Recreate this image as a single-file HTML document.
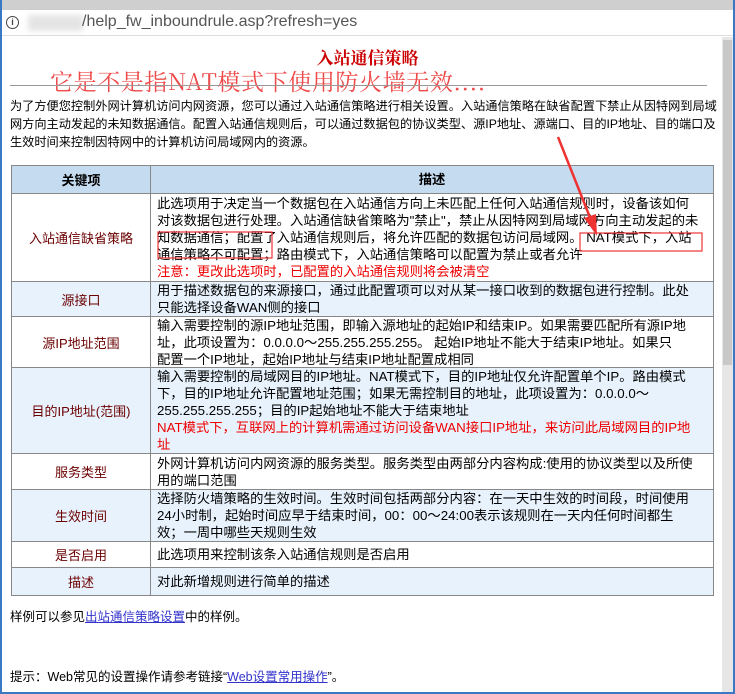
<!DOCTYPE html>
<html><head><meta charset="utf-8"><style>
*{margin:0;padding:0;box-sizing:border-box}
body{width:735px;height:694px;overflow:hidden;background:#fff;position:relative;font-family:"Liberation Sans","Noto Sans CJK SC",sans-serif;font-size:13px;color:#000}
.a{position:absolute}
.cell{position:absolute;border-right:1px solid #888;border-bottom:1px solid #888}
.k{left:11px;width:140px;color:#6b0000;text-align:center;display:flex;align-items:center;justify-content:center;border-left:1px solid #888}
.d{left:151px;width:563px;padding:0 6px;line-height:17px;display:flex;flex-direction:column;justify-content:center;white-space:nowrap;font-size:13.3px}
.bl{background:#e8f2fc}
.wh{background:#fff}
.red{color:#e00}
</style></head><body>
<div class="a" style="left:0;top:0;width:735px;height:10px;background:#cfcfcf"></div>
<div class="a" style="left:0;top:10px;width:735px;height:26px;background:#fff;border-bottom:1px solid #ddd"></div>
<div class="a" style="left:0;top:0;width:2px;height:694px;background:#3b78c4"></div>
<div class="a" style="left:733px;top:0;width:2px;height:694px;background:#3b78c4"></div>
<div class="a" style="left:0;top:692px;width:735px;height:2px;background:#3b78c4"></div>
<div class="a" style="left:6px;top:16px;width:13px;height:13px;border:1.5px solid #444;border-radius:50%;font-size:9px;line-height:10px;text-align:center;font-weight:bold;color:#444">i</div>
<div class="a" style="left:28px;top:15px;width:55px;height:16px;background:#e4e4e4;filter:blur(3px)"></div>
<div class="a" style="left:82px;top:13px;font-size:16px;color:#555">/help_fw_inboundrule.asp?refresh=yes</div>
<div class="a" style="left:722px;top:37px;width:11px;height:655px;background:#e6e6e6"></div>
<div class="a" style="left:723px;top:40px;width:9px;height:325px;background:#c8c8c8"></div>

<div class="a" style="left:0;top:44px;width:735px;text-align:center;font-family:'Noto Serif CJK SC',serif;font-size:17px;color:#c00;font-weight:bold">入站通信策略</div>
<div class="a" style="left:50px;top:64px;font-family:'Noto Serif CJK SC',serif;font-size:23px;color:#ee4a4a;letter-spacing:0.6px">它是不是指NAT模式下使用防火墙无效....</div>
<div class="a" style="left:10px;top:85px;width:697px;height:1px;background:#999"></div>
<div class="a" style="left:10px;top:97px;width:710px;line-height:18px;font-size:12.2px;white-space:nowrap">为了方便您控制外网计算机访问内网资源，您可以通过入站通信策略进行相关设置。入站通信策略在缺省配置下禁止从因特网到局域<br>网方向主动发起的未知数据通信。配置入站通信规则后，可以通过数据包的协议类型、源IP地址、源端口、目的IP地址、目的端口及<br>生效时间来控制因特网中的计算机访问局域网内的资源。</div>

<div class="a" style="left:11px;top:165px;width:703px;height:1px;background:#888"></div>
<div class="cell k" style="top:166px;height:28px;background:#c5dbf0;color:#000;font-weight:bold">关键项</div>
<div class="cell d" style="top:166px;height:28px;background:#c5dbf0;font-weight:bold;align-items:center">描述</div>

<div class="cell k wh" style="top:194px;height:88px">入站通信缺省策略</div>
<div class="cell d wh" style="top:194px;height:88px"><div>此选项用于决定当一个数据包在入站通信方向上未匹配上任何入站通信规则时，设备该如何<br>对该数据包进行处理。入站通信缺省策略为"禁止"，禁止从因特网到局域网方向主动发起的未<br>知数据通信；配置了入站通信规则后，将允许匹配的数据包访问局域网。 NAT模式下，入站<br>通信策略不可配置；路由模式下，入站通信策略可以配置为禁止或者允许</div><div class="red">注意：更改此选项时，已配置的入站通信规则将会被清空</div></div>

<div class="cell k bl" style="top:282px;height:35px">源接口</div>
<div class="cell d bl" style="top:282px;height:35px">用于描述数据包的来源接口，通过此配置项可以对从某一接口收到的数据包进行控制。此处<br>只能选择设备WAN侧的接口</div>

<div class="cell k wh" style="top:317px;height:51px">源IP地址范围</div>
<div class="cell d wh" style="top:317px;height:51px">输入需要控制的源IP地址范围，即输入源地址的起始IP和结束IP。如果需要匹配所有源IP地<br>址，此项设置为：0.0.0.0～255.255.255.255。 起始IP地址不能大于结束IP地址。如果只<br>配置一个IP地址，起始IP地址与结束IP地址配置成相同</div>

<div class="cell k bl" style="top:368px;height:86px">目的IP地址(范围)</div>
<div class="cell d bl" style="top:368px;height:86px"><div>输入需要控制的局域网目的IP地址。NAT模式下，目的IP地址仅允许配置单个IP。路由模式<br>下，目的IP地址允许配置地址范围；如果无需控制目的地址，此项设置为：0.0.0.0～<br>255.255.255.255；目的IP起始地址不能大于结束地址</div><div class="red">NAT模式下，互联网上的计算机需通过访问设备WAN接口IP地址，来访问此局域网目的IP地<br>址</div></div>

<div class="cell k wh" style="top:454px;height:36px">服务类型</div>
<div class="cell d wh" style="top:454px;height:36px">外网计算机访问内网资源的服务类型。服务类型由两部分内容构成:使用的协议类型以及所使<br>用的端口范围</div>

<div class="cell k bl" style="top:490px;height:52px">生效时间</div>
<div class="cell d bl" style="top:490px;height:52px">选择防火墙策略的生效时间。生效时间包括两部分内容：在一天中生效的时间段，时间使用<br>24小时制，起始时间应早于结束时间，00：00～24:00表示该规则在一天内任何时间都生<br>效；一周中哪些天规则生效</div>

<div class="cell k wh" style="top:542px;height:26px">是否启用</div>
<div class="cell d wh" style="top:542px;height:26px">此选项用来控制该条入站通信规则是否启用</div>

<div class="cell k bl" style="top:568px;height:28px">描述</div>
<div class="cell d bl" style="top:568px;height:28px">对此新增规则进行简单的描述</div>

<div class="a" style="left:10px;top:606px;font-size:12.5px">样例可以参见<span style="color:#33c;text-decoration:underline">出站通信策略设置</span>中的样例。</div>
<div class="a" style="left:10px;top:666px;font-size:12.5px">提示：Web常见的设置操作请参考链接“<span style="color:#33c;text-decoration:underline">Web设置常用操作</span>”。</div>

<svg class="a" style="left:0;top:0" width="735" height="694">
<rect x="158" y="232" width="114" height="26" fill="none" stroke="#e33" stroke-width="1.2"/>
<rect x="580" y="233" width="122" height="18" fill="none" stroke="#e33" stroke-width="1.2"/>
<line x1="558" y1="137" x2="591" y2="220" stroke="#e33" stroke-width="2.5"/>
<polygon points="597,236 584,218 596,214" fill="#e33"/>
</svg>
</body></html>
